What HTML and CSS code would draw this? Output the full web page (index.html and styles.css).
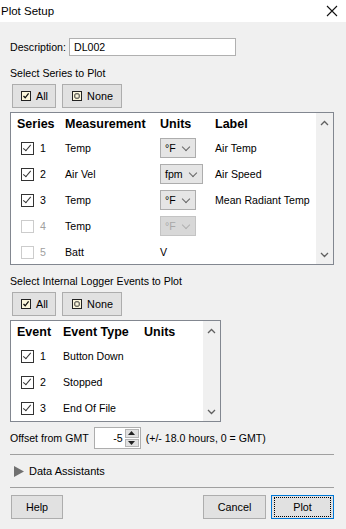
FILE: index.html
```html
<!DOCTYPE html>
<html lang="en">
<head>
    <meta charset="UTF-8">
    <title>Plot Setup</title>
    <link rel="stylesheet" href="styles.css">
</head>
<body>
    <div class="titlebar">
        <span class="title">Plot Setup</span>
        <svg class="close" width="12" height="12" viewBox="0 0 12 12"><path d="M1 1L11 11M11 1L1 11" stroke="#111" stroke-width="1.1"/></svg>
    </div>

    <div class="dialog">
        <div class="desc-row">
            <span class="desc-label">Description:</span>
            <div class="textbox">DL002</div>
        </div>

        <div class="section-label">Select Series to Plot</div>
        <div class="btn-row">
            <button class="btn btn-all">
                <svg width="12" height="12" viewBox="0 0 12 12"><rect x="1.5" y="1.5" width="9" height="9" fill="#fbf6dc" stroke="#222"/><path d="M3.5 6L5.2 7.8L8.6 3.4" fill="none" stroke="#111" stroke-width="1.3"/></svg>
                All
            </button>
            <button class="btn btn-none">
                <svg width="12" height="12" viewBox="0 0 12 12"><rect x="1.5" y="1.5" width="9" height="9" fill="#fbf6dc" stroke="#222"/><rect x="3.8" y="3.8" width="4.4" height="4.4" rx="1" fill="none" stroke="#333"/></svg>
                None
            </button>
        </div>

        <div class="list series-list">
            <div class="list-body">
                <div class="row head">
                    <span class="c1">Series</span>
                    <span class="c2">Measurement</span>
                    <span class="c3">Units</span>
                    <span class="c4">Label</span>
                </div>
                <div class="row">
                    <span class="c1"><i class="check on"></i>1</span>
                    <span class="c2">Temp</span>
                    <span class="c3"><span class="combo">&deg;F<b class="chev"></b></span></span>
                    <span class="c4">Air Temp</span>
                </div>
                <div class="row">
                    <span class="c1"><i class="check on"></i>2</span>
                    <span class="c2">Air Vel</span>
                    <span class="c3"><span class="combo">fpm<b class="chev"></b></span></span>
                    <span class="c4">Air Speed</span>
                </div>
                <div class="row">
                    <span class="c1"><i class="check on"></i>3</span>
                    <span class="c2">Temp</span>
                    <span class="c3"><span class="combo">&deg;F<b class="chev"></b></span></span>
                    <span class="c4">Mean Radiant Temp</span>
                </div>
                <div class="row">
                    <span class="c1 dim"><i class="check off"></i>4</span>
                    <span class="c2">Temp</span>
                    <span class="c3"><span class="combo disabled">&deg;F<b class="chev"></b></span></span>
                    <span class="c4"></span>
                </div>
                <div class="row">
                    <span class="c1 dim"><i class="check off"></i>5</span>
                    <span class="c2">Batt</span>
                    <span class="c3">V</span>
                    <span class="c4"></span>
                </div>
            </div>
            <div class="scrollbar">
                <svg width="9" height="6" viewBox="0 0 9 6"><path d="M1 5L4.5 1.5L8 5" fill="none" stroke="#606060" stroke-width="1.3"/></svg>
                <svg width="9" height="6" viewBox="0 0 9 6"><path d="M1 1L4.5 4.5L8 1" fill="none" stroke="#606060" stroke-width="1.3"/></svg>
            </div>
        </div>

        <div class="section-label second">Select Internal Logger Events to Plot</div>
        <div class="btn-row">
            <button class="btn btn-all">
                <svg width="12" height="12" viewBox="0 0 12 12"><rect x="1.5" y="1.5" width="9" height="9" fill="#fbf6dc" stroke="#222"/><path d="M3.5 6L5.2 7.8L8.6 3.4" fill="none" stroke="#111" stroke-width="1.3"/></svg>
                All
            </button>
            <button class="btn btn-none">
                <svg width="12" height="12" viewBox="0 0 12 12"><rect x="1.5" y="1.5" width="9" height="9" fill="#fbf6dc" stroke="#222"/><rect x="3.8" y="3.8" width="4.4" height="4.4" rx="1" fill="none" stroke="#333"/></svg>
                None
            </button>
        </div>

        <div class="list event-list">
            <div class="list-body">
                <div class="row head">
                    <span class="e1">Event</span>
                    <span class="e2">Event Type</span>
                    <span class="e3">Units</span>
                </div>
                <div class="row">
                    <span class="e1"><i class="check on"></i>1</span>
                    <span class="e2">Button Down</span>
                </div>
                <div class="row">
                    <span class="e1"><i class="check on"></i>2</span>
                    <span class="e2">Stopped</span>
                </div>
                <div class="row">
                    <span class="e1"><i class="check on"></i>3</span>
                    <span class="e2">End Of File</span>
                </div>
            </div>
            <div class="scrollbar">
                <svg width="9" height="6" viewBox="0 0 9 6"><path d="M1 5L4.5 1.5L8 5" fill="none" stroke="#606060" stroke-width="1.3"/></svg>
                <svg width="9" height="6" viewBox="0 0 9 6"><path d="M1 1L4.5 4.5L8 1" fill="none" stroke="#606060" stroke-width="1.3"/></svg>
            </div>
        </div>

        <div class="offset-row">
            <span>Offset from GMT</span>
            <div class="spinner">
                <span class="spin-value">-5</span>
                <span class="spin-btns">
                    <span class="spin-btn"><svg width="7" height="4" viewBox="0 0 7 4"><path d="M0 4L3.5 0L7 4Z" fill="#222"/></svg></span>
                    <span class="spin-btn"><svg width="7" height="4" viewBox="0 0 7 4"><path d="M0 0L3.5 4L7 0Z" fill="#222"/></svg></span>
                </span>
            </div>
            <span>(+/- 18.0 hours, 0 = GMT)</span>
        </div>

        <div class="assist-row">
            <svg width="10" height="11" viewBox="0 0 10 11"><path d="M0 0L10 5.5L0 11Z" fill="#707070"/></svg>
            <span>Data Assistants</span>
        </div>

        <div class="footer">
            <button class="btn btn-help">Help</button>
            <div class="footer-right">
                <button class="btn btn-cancel">Cancel</button>
                <button class="btn btn-plot"><span class="focus">Plot</span></button>
            </div>
        </div>
    </div>
</body>
</html>
```

FILE: styles.css
```css
/* ======= Plot Setup dialog ======= */
body {
    margin: 0;
    width: 346px;
    height: 529px;
    overflow: hidden;
    background: #f0f0f0;
    font-family: "Liberation Sans", Arial, sans-serif;
    font-size: 10.6px;
    color: #000;
}

.titlebar {
    height: 22px;
    background: #fff;
    display: flex;
    align-items: center;
    justify-content: space-between;
    padding: 0 8px 0 1px;
    font-size: 11.5px;
}

.dialog {
    padding: 16px 12px 0 10px;
}

/* Description */
.desc-row {
    display: flex;
    align-items: center;
    height: 18px;
}

.desc-label {
    width: 59px;
}

.textbox {
    width: 161px;
    height: 16px;
    line-height: 16px;
    padding-left: 4px;
    background: #fff;
    border: 1px solid #b0b0b0;
}

.section-label {
    margin-top: 10px;
    height: 14px;
    line-height: 14px;
}

.section-label.second {
    margin-top: 9px;
}

/* Buttons */
.btn-row {
    display: flex;
    gap: 6px;
    margin: 4px 0 4px 2px;
}

.btn {
    font-family: inherit;
    font-size: 10.8px;
    color: #000;
    background: #e1e1e1;
    border: 1px solid #adadad;
    height: 24px;
    padding: 0;
    display: flex;
    align-items: center;
    justify-content: center;
    gap: 4px;
}

.btn-all {
    width: 44px;
}

.btn-none {
    width: 60px;
}

/* Lists */
.list {
    display: flex;
    background: #fff;
    border: 1px solid #828790;
    overflow: hidden;
}

.series-list {
    height: 151px;
}

.event-list {
    width: 209px;
    height: 100px;
}

.list-body {
    flex: 1;
    padding-left: 6px;
}

.row {
    display: flex;
    align-items: center;
    height: 26px;
}

.row.head {
    height: 22px;
    font-weight: bold;
    font-size: 12.5px;
}

.c1, .e1 {
    display: flex;
    align-items: center;
}

.c1 { width: 48px; }
.c2 { width: 95px; }
.c3 { width: 55px; }
.e1 { width: 46px; }
.e2 { width: 81px; }

.row:not(.head) .c1 {
    width: 44px;
    padding-left: 4px;
}

.row:not(.head) .e1 {
    width: 42px;
    padding-left: 4px;
}

.dim {
    color: #a0a0a0;
}

.check {
    width: 11px;
    height: 11px;
    border: 1px solid #333;
    background: #fff;
    margin-right: 6px;
    position: relative;
}

.check.off {
    border-color: #cccccc;
}

.check.on::after {
    content: "";
    position: absolute;
    left: 3px;
    top: 0px;
    width: 3px;
    height: 7px;
    border: solid #333;
    border-width: 0 1px 1px 0;
    transform: rotate(40deg);
}

.combo {
    display: inline-flex;
    align-items: center;
    height: 20px;
    padding: 0 4px 0 4px;
    gap: 7px;
    background: #e5e5e5;
    border: 1px solid #adadad;
    box-sizing: border-box;
}

.combo.disabled {
    background: #d8d8d8;
    color: #a8a8a8;
    border-color: #c4c4c4;
}

.chev {
    width: 5px;
    height: 5px;
    border: solid #666;
    border-width: 0 1px 1px 0;
    transform: rotate(45deg);
    margin: -3px 2px 0 0;
}

.combo.disabled .chev {
    border-color: #b0b0b0;
}

.scrollbar {
    width: 17px;
    background: #f0f0f0;
    display: flex;
    flex-direction: column;
    justify-content: space-between;
    align-items: center;
    padding: 7px 0 6px;
}

/* Offset */
.offset-row {
    display: flex;
    align-items: center;
    gap: 5px;
    height: 22px;
    margin-top: 5px;
}

.spinner {
    display: flex;
    width: 45px;
    height: 20px;
    background: #fff;
    border: 1px solid #adadad;
}

.spin-value {
    flex: 1;
    text-align: right;
    line-height: 20px;
    padding-right: 2px;
}

.spin-btns {
    display: flex;
    flex-direction: column;
    width: 14px;
    gap: 1px;
    padding: 1px 1px 1px 0;
}

.spin-btn {
    flex: 1;
    background: #e1e1e1;
    border: 1px solid #b4b4b4;
    display: flex;
    align-items: center;
    justify-content: center;
}

/* Data assistants */
.assist-row {
    display: flex;
    align-items: center;
    gap: 5px;
    height: 32px;
    margin-top: 5px;
    padding-left: 4px;
    border-top: 1px solid #a0a0a0;
    border-bottom: 1px solid #a0a0a0;
    font-size: 11px;
}

/* Footer */
.footer {
    display: flex;
    justify-content: space-between;
    margin-top: 7px;
    padding-left: 1px;
}

.footer-right {
    display: flex;
    gap: 5px;
}

.btn-help {
    width: 52px;
}

.btn-cancel {
    width: 63px;
}

.btn-plot {
    width: 63px;
    border-color: #0078d7;
    padding: 2px;
}

.focus {
    flex: 1;
    height: 100%;
    border: 1px dotted #000;
    display: flex;
    align-items: center;
    justify-content: center;
}
```
